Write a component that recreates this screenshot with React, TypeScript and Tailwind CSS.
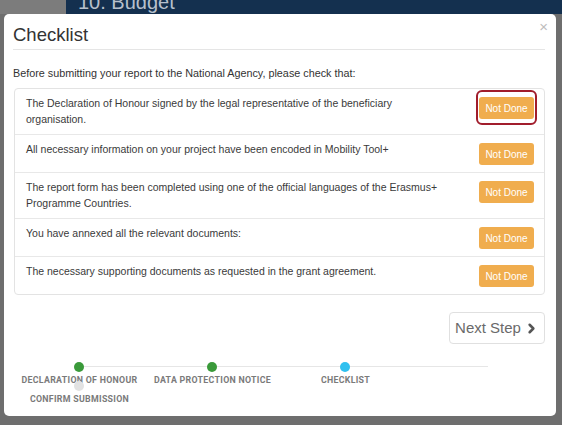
import { ChevronRight } from "lucide-react";

const items = [
  { text: "The Declaration of Honour signed by the legal representative of the beneficiary organisation.", marked: true },
  { text: "All necessary information on your project have been encoded in Mobility Tool+" },
  { text: "The report form has been completed using one of the official languages of the Erasmus+ Programme Countries." },
  { text: "You have annexed all the relevant documents:" },
  { text: "The necessary supporting documents as requested in the grant agreement." },
];

const steps = [
  { label: "DECLARATION OF HONOUR", dot: "bg-[#3a9a3a]", line: true },
  { label: "DATA PROTECTION NOTICE", dot: "bg-[#3a9a3a]", line: true },
  { label: "CHECKLIST", dot: "bg-[#2fc0ef]", line: true },
  { label: "CONFIRM SUBMISSION", dot: "bg-[#e2e2e2]", line: false },
];

function NotDone({ marked }: { marked?: boolean }) {
  return (
    <div className="relative mt-px shrink-0">
      <button className="block h-[22px] w-[55px] rounded-[3px] bg-[#f0ad4e] text-[10px] text-white">Not Done</button>
      {marked && (
        <span className="pointer-events-none absolute -top-[7px] -bottom-[6px] -left-[3px] -right-[3px] rounded-[6px] border-2 border-[#a11d2c]" />
      )}
    </div>
  );
}

export default function App() {
  return (
    <div className="relative h-[429px] w-[573px] overflow-hidden bg-white font-['Liberation_Sans',Arial,sans-serif]">
      {/* page behind the dimmed overlay */}
      <div className="h-[425px] w-[562px] bg-[#6e6e6e]">
        <div className="flex h-[14px]">
          <div className="w-[66px] bg-[#7c7c7c]" />
          <div className="flex-1 overflow-hidden bg-[#14304f] pl-[12px]">
            <div className="-mt-[9px] text-[20px] leading-[22px] text-[#b7c0cc]">10. Budget</div>
          </div>
        </div>
      </div>

      {/* modal */}
      <div className="absolute left-[4px] top-[14px] flex h-[402px] w-[552px] flex-col rounded-[5px] bg-white pl-[9px] pr-[11px]">
        <div className="flex items-start justify-between border-b border-[#e5e5e5] pt-[9px] pb-[2px]">
          <h2 className="text-[18.5px] leading-[24px] text-[#333]">Checklist</h2>
          <span className="-mr-[3px] -mt-[4px] text-[15px] leading-[16px] text-[#bdbdbd]">×</span>
        </div>

        <p className="mt-[15px] text-[10.8px] leading-[16px] text-[#333]">
          Before submitting your report to the National Agency, please check that:
        </p>

        <ul className="mt-[7px] ml-px rounded-[4px] border border-[#e3e3e3]">
          {items.map((it, i) => (
            <li
              key={i}
              className="flex items-start justify-between gap-4 border-t border-[#e8e8e8] py-[7px] pl-[11px] pr-[10px] first:border-t-0"
            >
              <span className="max-w-[420px] text-[10.5px] leading-[15.5px] text-[#3a3a3a]">{it.text}</span>
              <NotDone marked={it.marked} />
            </li>
          ))}
        </ul>

        <button className="mt-[17px] flex h-[32px] w-[96px] items-center justify-center gap-[3px] self-end rounded-[4px] border border-[#e0e0e0] text-[15px] text-[#6a6a6a]">
          Next Step
          <ChevronRight size={15} strokeWidth={4} className="text-[#555]" />
        </button>

        <div className="mt-[18px] flex w-[420px] flex-wrap">
          {steps.map((s) => (
            <div key={s.label} className="relative h-[19px] w-[133px]">
              {s.line && <span className="absolute left-[66px] top-[4px] h-px w-[143px] bg-[#e6e6e6]" />}
              <span className={`absolute left-[61px] top-0 h-[10px] w-[10px] rounded-full ${s.dot}`} />
              <span className="absolute left-1/2 top-[13px] -translate-x-1/2 whitespace-nowrap font-['Roboto',sans-serif] text-[8.8px] font-bold leading-[10px] tracking-[0.3px] text-[#7a7a7a]">
                {s.label}
              </span>
            </div>
          ))}
        </div>
      </div>
    </div>
  );
}
